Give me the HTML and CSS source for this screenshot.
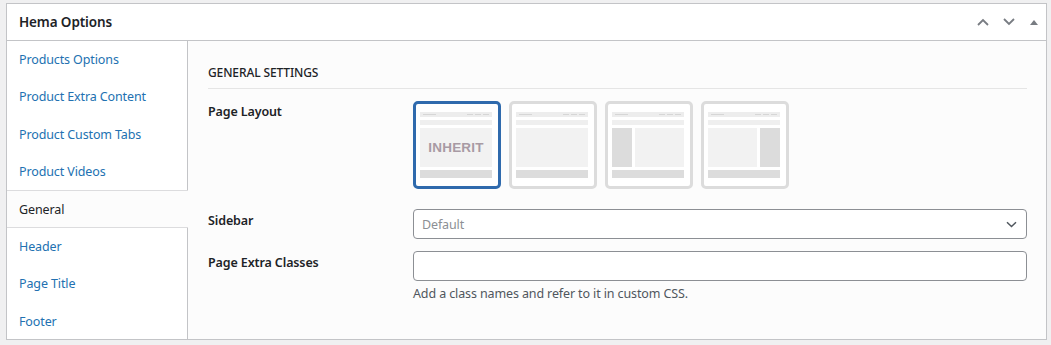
FILE: index.html
```html
<!DOCTYPE html>
<html lang="en">
<head>
<meta charset="utf-8">
<title>Hema Options</title>
<link rel="stylesheet" href="styles.css">
</head>
<body>
<div class="postbox">
  <div class="postbox-header">
    <h2 class="postbox-title">Hema Options</h2>
    <div class="handle-actions">
      <button class="handle-btn" aria-label="Move up">
        <svg width="14" height="10" viewBox="0 0 14 10"><path d="M2 8 L7 3 L12 8" fill="none" stroke="#787c82" stroke-width="1.8"/></svg>
      </button>
      <button class="handle-btn" aria-label="Move down">
        <svg width="14" height="10" viewBox="0 0 14 10"><path d="M2 2 L7 7 L12 2" fill="none" stroke="#787c82" stroke-width="1.8"/></svg>
      </button>
      <button class="handle-btn toggle" aria-label="Toggle panel">
        <svg width="8" height="6" viewBox="0 0 8 6"><path d="M0 6 L4 1 L8 6 Z" fill="#787c82"/></svg>
      </button>
    </div>
  </div>
  <div class="postbox-body">
    <ul class="tabs">
      <li class="tab"><a href="#">Products Options</a></li>
      <li class="tab"><a href="#">Product Extra Content</a></li>
      <li class="tab"><a href="#">Product Custom Tabs</a></li>
      <li class="tab"><a href="#">Product Videos</a></li>
      <li class="tab active"><a href="#">General</a></li>
      <li class="tab"><a href="#">Header</a></li>
      <li class="tab"><a href="#">Page Title</a></li>
      <li class="tab"><a href="#">Footer</a></li>
    </ul>
    <div class="panel">
      <h3 class="section-title">General Settings</h3>
      <div class="field field-layout">
        <div class="field-label">Page Layout</div>
        <div class="field-control layouts">
          <div class="thumb selected">
            <div class="t-head"><span class="dash long"></span><span class="dashes"><span class="dash"></span><span class="dash"></span><span class="dash"></span></span></div>
            <div class="t-nav"></div>
            <div class="t-main inherit"><span class="inherit-text">INHERIT</span></div>
            <div class="t-foot"></div>
          </div>
          <div class="thumb">
            <div class="t-head"><span class="dash long"></span><span class="dashes"><span class="dash"></span><span class="dash"></span><span class="dash"></span></span></div>
            <div class="t-nav"></div>
            <div class="t-main"></div>
            <div class="t-foot"></div>
          </div>
          <div class="thumb">
            <div class="t-head"><span class="dash long"></span><span class="dashes"><span class="dash"></span><span class="dash"></span><span class="dash"></span></span></div>
            <div class="t-nav"></div>
            <div class="t-main split"><div class="t-side"></div><div class="t-content"></div></div>
            <div class="t-foot"></div>
          </div>
          <div class="thumb">
            <div class="t-head"><span class="dash long"></span><span class="dashes"><span class="dash"></span><span class="dash"></span><span class="dash"></span></span></div>
            <div class="t-nav"></div>
            <div class="t-main split"><div class="t-content"></div><div class="t-side"></div></div>
            <div class="t-foot"></div>
          </div>
        </div>
      </div>
      <div class="field field-sidebar">
        <div class="field-label">Sidebar</div>
        <div class="field-control">
          <div class="select">
            <span class="select-value">Default</span>
            <svg class="select-arrow" width="11" height="7" viewBox="0 0 11 7"><path d="M1 1.2 L5.5 5.5 L10 1.2" fill="none" stroke="#50575e" stroke-width="1.5"/></svg>
          </div>
        </div>
      </div>
      <div class="field field-classes">
        <div class="field-label">Page Extra Classes</div>
        <div class="field-control">
          <input class="text-input" type="text">
          <p class="description">Add a class names and refer to it in custom CSS.</p>
        </div>
      </div>
    </div>
  </div>
</div>
</body>
</html>
```

FILE: styles.css
```css
* { box-sizing: border-box; }

body {
  margin: 0;
  padding: 3px 0 0 6px;
  background: #f0f0f1;
  font-family: "Noto Sans", "Open Sans", sans-serif;
  font-size: 12.5px;
  letter-spacing: -0.12px;
  color: #1d2327;
}

.postbox {
  width: 1041px;
  border: 1px solid #c3c4c7;
  background: #fff;
}

.postbox-header {
  height: 37px;
  border-bottom: 1px solid #c3c4c7;
  display: flex;
  align-items: center;
  justify-content: space-between;
  padding: 0 0 0 12px;
}

.postbox-title {
  margin: 0;
  font-size: 13.5px;
  font-weight: 600;
  line-height: 1.4;
  color: #1d2327;
}

.handle-actions {
  display: flex;
  align-items: center;
}

.handle-btn {
  width: 26px;
  height: 36px;
  border: 0;
  background: none;
  padding: 0;
  display: flex;
  align-items: center;
  justify-content: center;
}

.handle-btn.toggle { width: 24px; }

.postbox-body {
  display: flex;
  height: 298px;
}

.tabs {
  list-style: none;
  margin: 0;
  padding: 0;
  width: 181px;
  flex: none;
  border-right: 1px solid #c3c4c7;
  background: #fff;
}

.tab {
  height: 37.25px;
  display: flex;
  align-items: center;
  padding: 0 12px;
}

.tab a {
  color: #2271b1;
  text-decoration: none;
}

.tab.active {
  background: #fcfcfc;
  border-top: 1px solid #dcdcde;
  border-bottom: 1px solid #dcdcde;
  margin-right: -1px;
  height: 38px;
  position: relative;
}

.tab.active a { color: #1d2327; }

.panel {
  flex: 1;
  background: #fcfcfc;
  padding: 20px 19px 0 20px;
}

.section-title {
  margin: 0;
  font-size: 12px;
  font-weight: 500;
  text-transform: uppercase;
  line-height: 24px;
  padding-bottom: 3px;
  border-bottom: 1px solid #e5e5e5;
  color: #1d2327;
}

.field {
  display: flex;
}

.field-layout { margin-top: 12px; }
.field-sidebar { margin-top: 20px; }
.field-classes { margin-top: 12px; }

.field-label {
  width: 205px;
  flex: none;
  font-weight: 600;
  line-height: 22px;
}

.field-sidebar .field-label,
.field-classes .field-label { padding-top: 1px; }

.field-control { flex: 1; }

.layouts {
  display: flex;
  gap: 8px;
}

.thumb {
  width: 88px;
  height: 88px;
  border: 3px solid #dcdcdc;
  border-radius: 5px;
  background: #fff;
  padding: 8px 6px 7px 4px;
  display: flex;
  flex-direction: column;
}

.thumb.selected { border-color: #2f6aad; }

.t-head {
  height: 5px;
  background: #ededed;
  display: flex;
  align-items: center;
  justify-content: space-between;
  padding: 0 3px;
}

.dash {
  display: block;
  height: 1px;
  width: 6px;
  background: #d6d6d6;
}

.dash.long { width: 13px; }

.dashes {
  display: flex;
  gap: 2px;
}

.t-nav {
  height: 5px;
  margin-top: 3px;
  background: #efefef;
}

.t-main {
  height: 39px;
  margin-top: 3px;
  background: #f2f2f2;
}

.t-main.inherit {
  display: flex;
  align-items: center;
  justify-content: center;
}

.inherit-text {
  font-family: "Liberation Sans", Arial, sans-serif;
  font-weight: 700;
  font-size: 13.5px;
  color: #a89aa4;
  letter-spacing: 0.2px;
}

.t-main.split {
  display: flex;
  gap: 3px;
  background: transparent;
}

.t-side {
  width: 20px;
  background: #dcdcdc;
}

.t-content {
  flex: 1;
  background: #f2f2f2;
}

.t-foot {
  height: 8px;
  margin-top: 3px;
  background: #dcdcdc;
}

.select {
  height: 30px;
  border: 1px solid #8c8f94;
  border-radius: 4px;
  background: #fff;
  display: flex;
  align-items: center;
  justify-content: space-between;
  padding: 0 9px 0 8px;
}

.select-value { color: #8c8f94; }

.text-input {
  display: block;
  width: 100%;
  height: 30px;
  border: 1px solid #8c8f94;
  border-radius: 4px;
  background: #fff;
  margin: 0;
  padding: 0 8px;
  font: inherit;
}

.description {
  margin: 2px 0 0;
  line-height: 22px;
  color: #50575e;
}
```
